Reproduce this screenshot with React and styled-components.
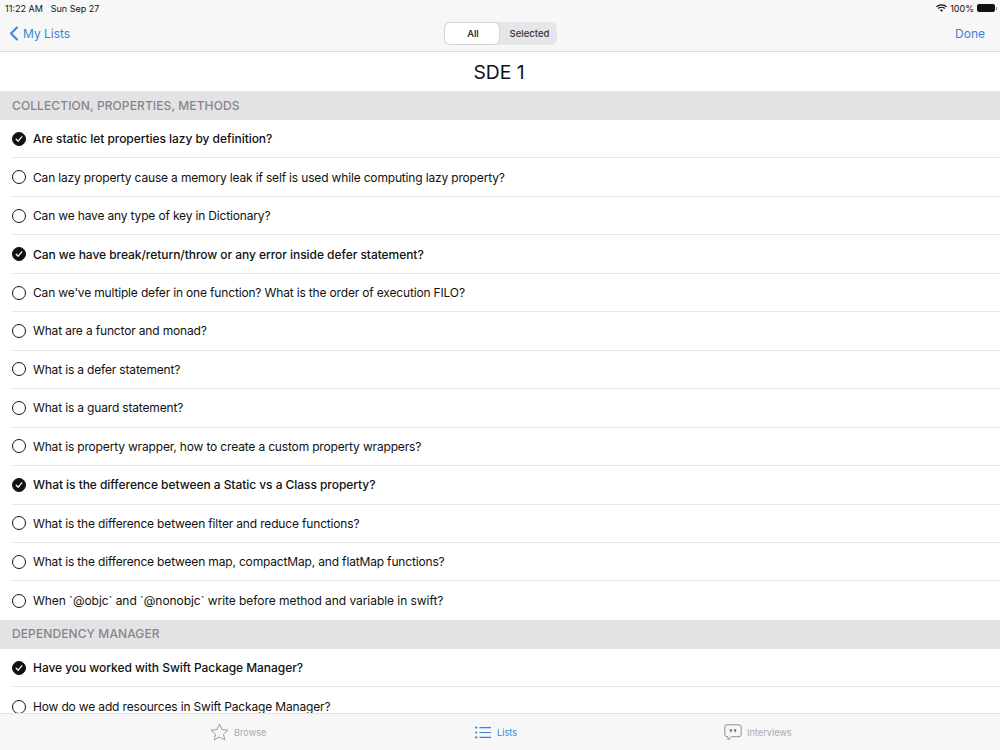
import styled, { createGlobalStyle } from "styled-components";

const GlobalStyle = createGlobalStyle`
  html, body {
    margin: 0;
    padding: 0;
    background: #fff;
  }
  * { box-sizing: border-box; }
`;

const Page = styled.div`
  width: 1000px;
  height: 750px;
  display: flex;
  flex-direction: column;
  overflow: hidden;
  font-family: Inter, "Liberation Sans", sans-serif;
  color: #111;
`;

const Header = styled.div`
  height: 52px;
  flex-shrink: 0;
  background: #f7f7f8;
  border-bottom: 1px solid #dcdcde;
`;

const StatusBar = styled.div`
  height: 15px;
  padding: 1px 5px 0;
  display: flex;
  align-items: center;
  justify-content: space-between;
  font-size: 9px;
`;

const StatusLeft = styled.div`
  display: flex;
  gap: 8px;
`;

const StatusRight = styled.div`
  display: flex;
  align-items: center;
  gap: 3px;
`;

const Battery = styled.span`
  width: 18px;
  height: 8px;
  border-radius: 2px;
  background: #111;
  position: relative;
  &::after {
    content: "";
    position: absolute;
    right: -2px;
    top: 2.5px;
    width: 1px;
    height: 3px;
    background: #888;
  }
`;

const NavBar = styled.div`
  height: 36px;
  display: grid;
  grid-template-columns: 1fr auto 1fr;
  align-items: center;
  padding: 0 15px;
`;

const BackLink = styled.div`
  display: flex;
  align-items: center;
  gap: 4px;
  margin-left: -6px;
  color: #3a85d6;
  font-size: 12px;
`;

const DoneLink = styled.div`
  justify-self: end;
  color: #3a85d6;
  font-size: 12px;
`;

const Segmented = styled.div`
  width: 113px;
  height: 23px;
  display: flex;
  padding: 1px;
  border-radius: 6px;
  background: #e6e6e8;
`;

const Segment = styled.div`
  flex: ${(props) => (props.$active ? "0 0 54px" : "1")};
  display: flex;
  align-items: center;
  justify-content: center;
  padding-left: ${(props) => (props.$active ? 3 : 5)}px;
  font-size: 9.5px;
  font-weight: 500;
  border-radius: 5px;
  background: ${(props) => (props.$active ? "#fff" : "transparent")};
  box-shadow: ${(props) => (props.$active ? "0 0 2px rgba(0,0,0,0.25)" : "none")};
  color: ${(props) => (props.$active ? "#111" : "#333")};
`;

const Content = styled.div`
  flex: 1;
  min-height: 0;
  overflow: hidden;
  background: #fff;
`;

const Title = styled.h1`
  margin: 0;
  height: 39px;
  display: flex;
  align-items: center;
  justify-content: center;
  padding-right: 2px;
  font-size: 19.3px;
  font-weight: 400;
`;

const SectionHeader = styled.div`
  height: 29px;
  display: flex;
  align-items: center;
  padding: 0 0 1px 12px;
  background: #e3e3e5;
  color: #86868a;
  font-size: 12px;
  font-weight: 500;
  letter-spacing: 0.1px;
`;

const Row = styled.div`
  height: 38.46px;
  margin-left: 12px;
  display: flex;
  align-items: center;
  gap: 7px;
  border-bottom: ${(props) => (props.$last ? "none" : "1px solid #e8e8ea")};
  font-size: 12px;
  letter-spacing: ${(props) => props.$spacing}px;
  font-weight: ${(props) => (props.$done ? 500 : 400)};
`;

const Radio = styled.span`
  width: 14px;
  height: 14px;
  flex-shrink: 0;
  display: flex;
  align-items: center;
  justify-content: center;
  border-radius: 50%;
  border: 1.2px solid #111;
  background: ${(props) => (props.$done ? "#111" : "transparent")};
`;

const TabBar = styled.div`
  height: 37px;
  flex-shrink: 0;
  display: grid;
  grid-template-columns: 475px 249px 1fr;
  background: #f7f7f8;
  border-top: 1px solid #e4e4e6;
`;

const Tab = styled.div`
  display: flex;
  align-items: center;
  gap: ${(props) => props.$gap}px;
  padding-left: ${(props) => props.$left || 0}px;
  font-size: 9.2px;
  color: ${(props) => (props.$active ? "#3a85d6" : "#a9a9ad")};
`;

const Check = () => (
  <svg width="8" height="8" viewBox="0 0 8 8" fill="none">
    <path d="M1.2 4.2 3.2 6.2 6.8 1.8" stroke="#fff" strokeWidth="1.3" strokeLinecap="round" strokeLinejoin="round" />
  </svg>
);

const BackChevron = () => (
  <svg width="10" height="15" viewBox="0 0 10 15" fill="none">
    <path d="M8 1.5 2 7.5 8 13.5" stroke="#3a85d6" strokeWidth="2" strokeLinecap="round" strokeLinejoin="round" />
  </svg>
);

const Wifi = () => (
  <svg width="11" height="8" viewBox="0 0 11 8" fill="none">
    <path d="M.5 2.8C3.3.2 7.7.2 10.5 2.8M2.2 4.5C4 2.9 7 2.9 8.8 4.5" stroke="#111" strokeWidth="1.3" />
    <path d="M3.9 6 5.5 7.8 7.1 6C6.2 5.2 4.8 5.2 3.9 6Z" fill="#111" />
  </svg>
);

const StarIcon = () => (
  <svg width="19" height="18" viewBox="0 0 19 18" fill="none">
    <path d="M9.5 1 12 6.6 18 7.2 13.5 11.2 14.8 17 9.5 14 4.2 17 5.5 11.2 1 7.2 7 6.6Z" stroke="#9d9da1" strokeWidth="1" strokeLinejoin="round" />
  </svg>
);

const ListIcon = () => (
  <svg width="16" height="13" viewBox="0 0 16 13" fill="none">
    <circle cx="1.2" cy="1.6" r="1.1" fill="#3a85d6" />
    <circle cx="1.2" cy="6.5" r="1.1" fill="#3a85d6" />
    <circle cx="1.2" cy="11.4" r="1.1" fill="#3a85d6" />
    <path d="M4.5 1.6H16M4.5 6.5H16M4.5 11.4H16" stroke="#3a85d6" strokeWidth="1.2" />
  </svg>
);

const QuoteIcon = () => (
  <svg width="18" height="17" viewBox="0 0 18 17" fill="none">
    <path d="M3 .8H15A2.2 2.2 0 0 1 17.2 3V10.5A2.2 2.2 0 0 1 15 12.7H7.5L4 16V12.7H3A2.2 2.2 0 0 1 .8 10.5V3A2.2 2.2 0 0 1 3 .8Z" stroke="#8f8f93" strokeWidth="1" strokeLinejoin="round" />
    <path d="M5.6 5.3H8V7.2L7 8.6H6.2L6.8 7.2H5.6ZM9.8 5.3H12.2V7.2L11.2 8.6H10.4L11 7.2H9.8Z" fill="#77777b" />
  </svg>
);

const sections = [
  {
    title: "COLLECTION, PROPERTIES, METHODS",
    items: [
      { text: "Are static let properties lazy by definition?", done: true },
      { text: "Can lazy property cause a memory leak if self is used while computing lazy property?" },
      { text: "Can we have any type of key in Dictionary?" },
      { text: "Can we have break/return/throw or any error inside defer statement?", done: true },
      { text: "Can we've multiple defer in one function? What is the order of execution FILO?" },
      { text: "What are a functor and monad?" },
      { text: "What is a defer statement?" },
      { text: "What is a guard statement?" },
      { text: "What is property wrapper, how to create a custom property wrappers?" },
      { text: "What is the difference between a Static vs a Class property?", done: true },
      { text: "What is the difference between filter and reduce functions?" },
      { text: "What is the difference between map, compactMap, and flatMap functions?" },
      { text: "When `@objc` and `@nonobjc` write before method and variable in swift?", spacing: -0.055 },
    ],
  },
  {
    title: "DEPENDENCY MANAGER",
    items: [
      { text: "Have you worked with Swift Package Manager?", done: true },
      { text: "How do we add resources in Swift Package Manager?" },
    ],
  },
];

const App = () => {
  return (
    <Page>
      <GlobalStyle />
      <Header>
        <StatusBar>
          <StatusLeft>
            <span>11:22 AM</span>
            <span>Sun Sep 27</span>
          </StatusLeft>
          <StatusRight>
            <Wifi />
            <span>100%</span>
            <Battery />
          </StatusRight>
        </StatusBar>
        <NavBar>
          <BackLink>
            <BackChevron />
            My Lists
          </BackLink>
          <Segmented>
            <Segment $active>All</Segment>
            <Segment>Selected</Segment>
          </Segmented>
          <DoneLink>Done</DoneLink>
        </NavBar>
      </Header>
      <Content>
        <Title>SDE 1</Title>
        {sections.map((section) => (
          <div key={section.title}>
            <SectionHeader>{section.title}</SectionHeader>
            {section.items.map((item, i) => (
              <Row
                key={item.text}
                $done={item.done}
                $last={i === section.items.length - 1}
                $spacing={item.spacing ?? (item.done ? -0.05 : -0.165)}
              >
                <Radio $done={item.done}>{item.done && <Check />}</Radio>
                {item.text}
              </Row>
            ))}
          </div>
        ))}
      </Content>
      <TabBar>
        <Tab $left={210} $gap={5}>
          <StarIcon />
          Browse
        </Tab>
        <Tab $active $gap={6}>
          <ListIcon />
          Lists
        </Tab>
        <Tab $gap={5}>
          <QuoteIcon />
          Interviews
        </Tab>
      </TabBar>
    </Page>
  );
};

export default App;
